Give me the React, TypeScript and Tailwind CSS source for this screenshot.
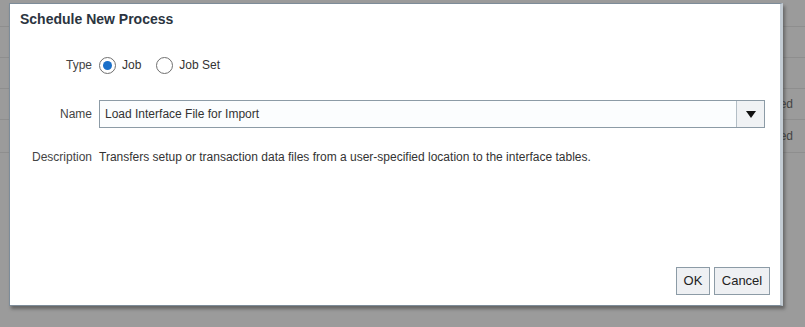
import React from "react";

function Radio({ checked }: { checked?: boolean }) {
  return (
    <span className="w-[17px] h-[17px] rounded-full border border-[#6f6f6f] bg-white flex items-center justify-center">
      {checked && <span className="w-[9px] h-[9px] rounded-full bg-[#1a6fc9]" />}
    </span>
  );
}

export default function App() {
  return (
    <div
      className="relative w-[805px] h-[327px] bg-[#9b9b9b] overflow-hidden text-[12px] text-[#333]"
      style={{ fontFamily: '"Liberation Sans", Arial, sans-serif' }}
    >
      {/* page behind the modal */}
      <div className="flex flex-col">
        <div className="h-[27px] border-b border-[#8e8e8e]" />
        <div className="h-[31px] border-b border-[#8e8e8e]" />
        <div className="h-[31px] border-b border-[#8e8e8e]" />
        <div className="h-[31px] border-b border-[#8e8e8e] flex items-center justify-end pr-[12px] text-[#444]">ed</div>
        <div className="h-[33px] border-b border-[#8e8e8e] flex items-center justify-end pr-[12px] text-[#444]">ed</div>
      </div>

      {/* modal dialog */}
      <div className="absolute left-[9px] top-[3px] w-[774px] h-[303px] bg-white border border-[#7d8c99] border-r-[3px] border-r-[#c3ccd4] shadow-[2px_3px_3px_rgba(60,60,60,0.55)] flex flex-col">
        <div className="pl-[10px] pt-[5px] h-[36px] text-[14px] font-bold text-[#2b3440]">
          Schedule New Process
        </div>

        <div className="grid grid-cols-[82px_1fr] gap-x-[7px] mt-[15px]">
          <div className="text-right text-[#444] h-[20px] flex items-center justify-end">Type</div>
          <div className="flex items-center h-[20px]">
            <Radio checked />
            <span className="ml-[6px]">Job</span>
            <span className="ml-[15px]"><Radio /></span>
            <span className="ml-[6px]">Job Set</span>
          </div>

          <div className="mt-[25px] text-right text-[#444] h-[28px] flex items-center justify-end">Name</div>
          <div className="mt-[25px] mr-[15px] flex h-[28px] border border-[#8c9ba6]">
            <div className="flex-1 flex items-center pl-[5px] bg-[#fbfdfe]">Load Interface File for Import</div>
            <div className="w-[28px] border-l border-[#b3bec6] bg-[#f0f2f4] flex items-center justify-center">
              <svg width="10" height="7" viewBox="0 0 10 7">
                <path d="M0 0 H10 L5 7 Z" fill="#111" />
              </svg>
            </div>
          </div>

          <div className="mt-[20px] text-right text-[#444] pl-[16px] whitespace-nowrap">Description</div>
          <div className="mt-[20px]">
            Transfers setup or transaction data files from a user-specified location to the interface tables.
          </div>
        </div>

        <div className="flex-1" />
        <div className="flex justify-end gap-[4px] pr-[10px] pb-[10px]">
          <button className="h-[28px] w-[34px] border border-[#8c9ba6] bg-[#eef0f3] font-medium text-[13px] text-[#222]">OK</button>
          <button className="h-[28px] w-[56px] border border-[#8c9ba6] bg-[#eef0f3] font-medium text-[13px] text-[#222]">Cancel</button>
        </div>
      </div>
    </div>
  );
}
